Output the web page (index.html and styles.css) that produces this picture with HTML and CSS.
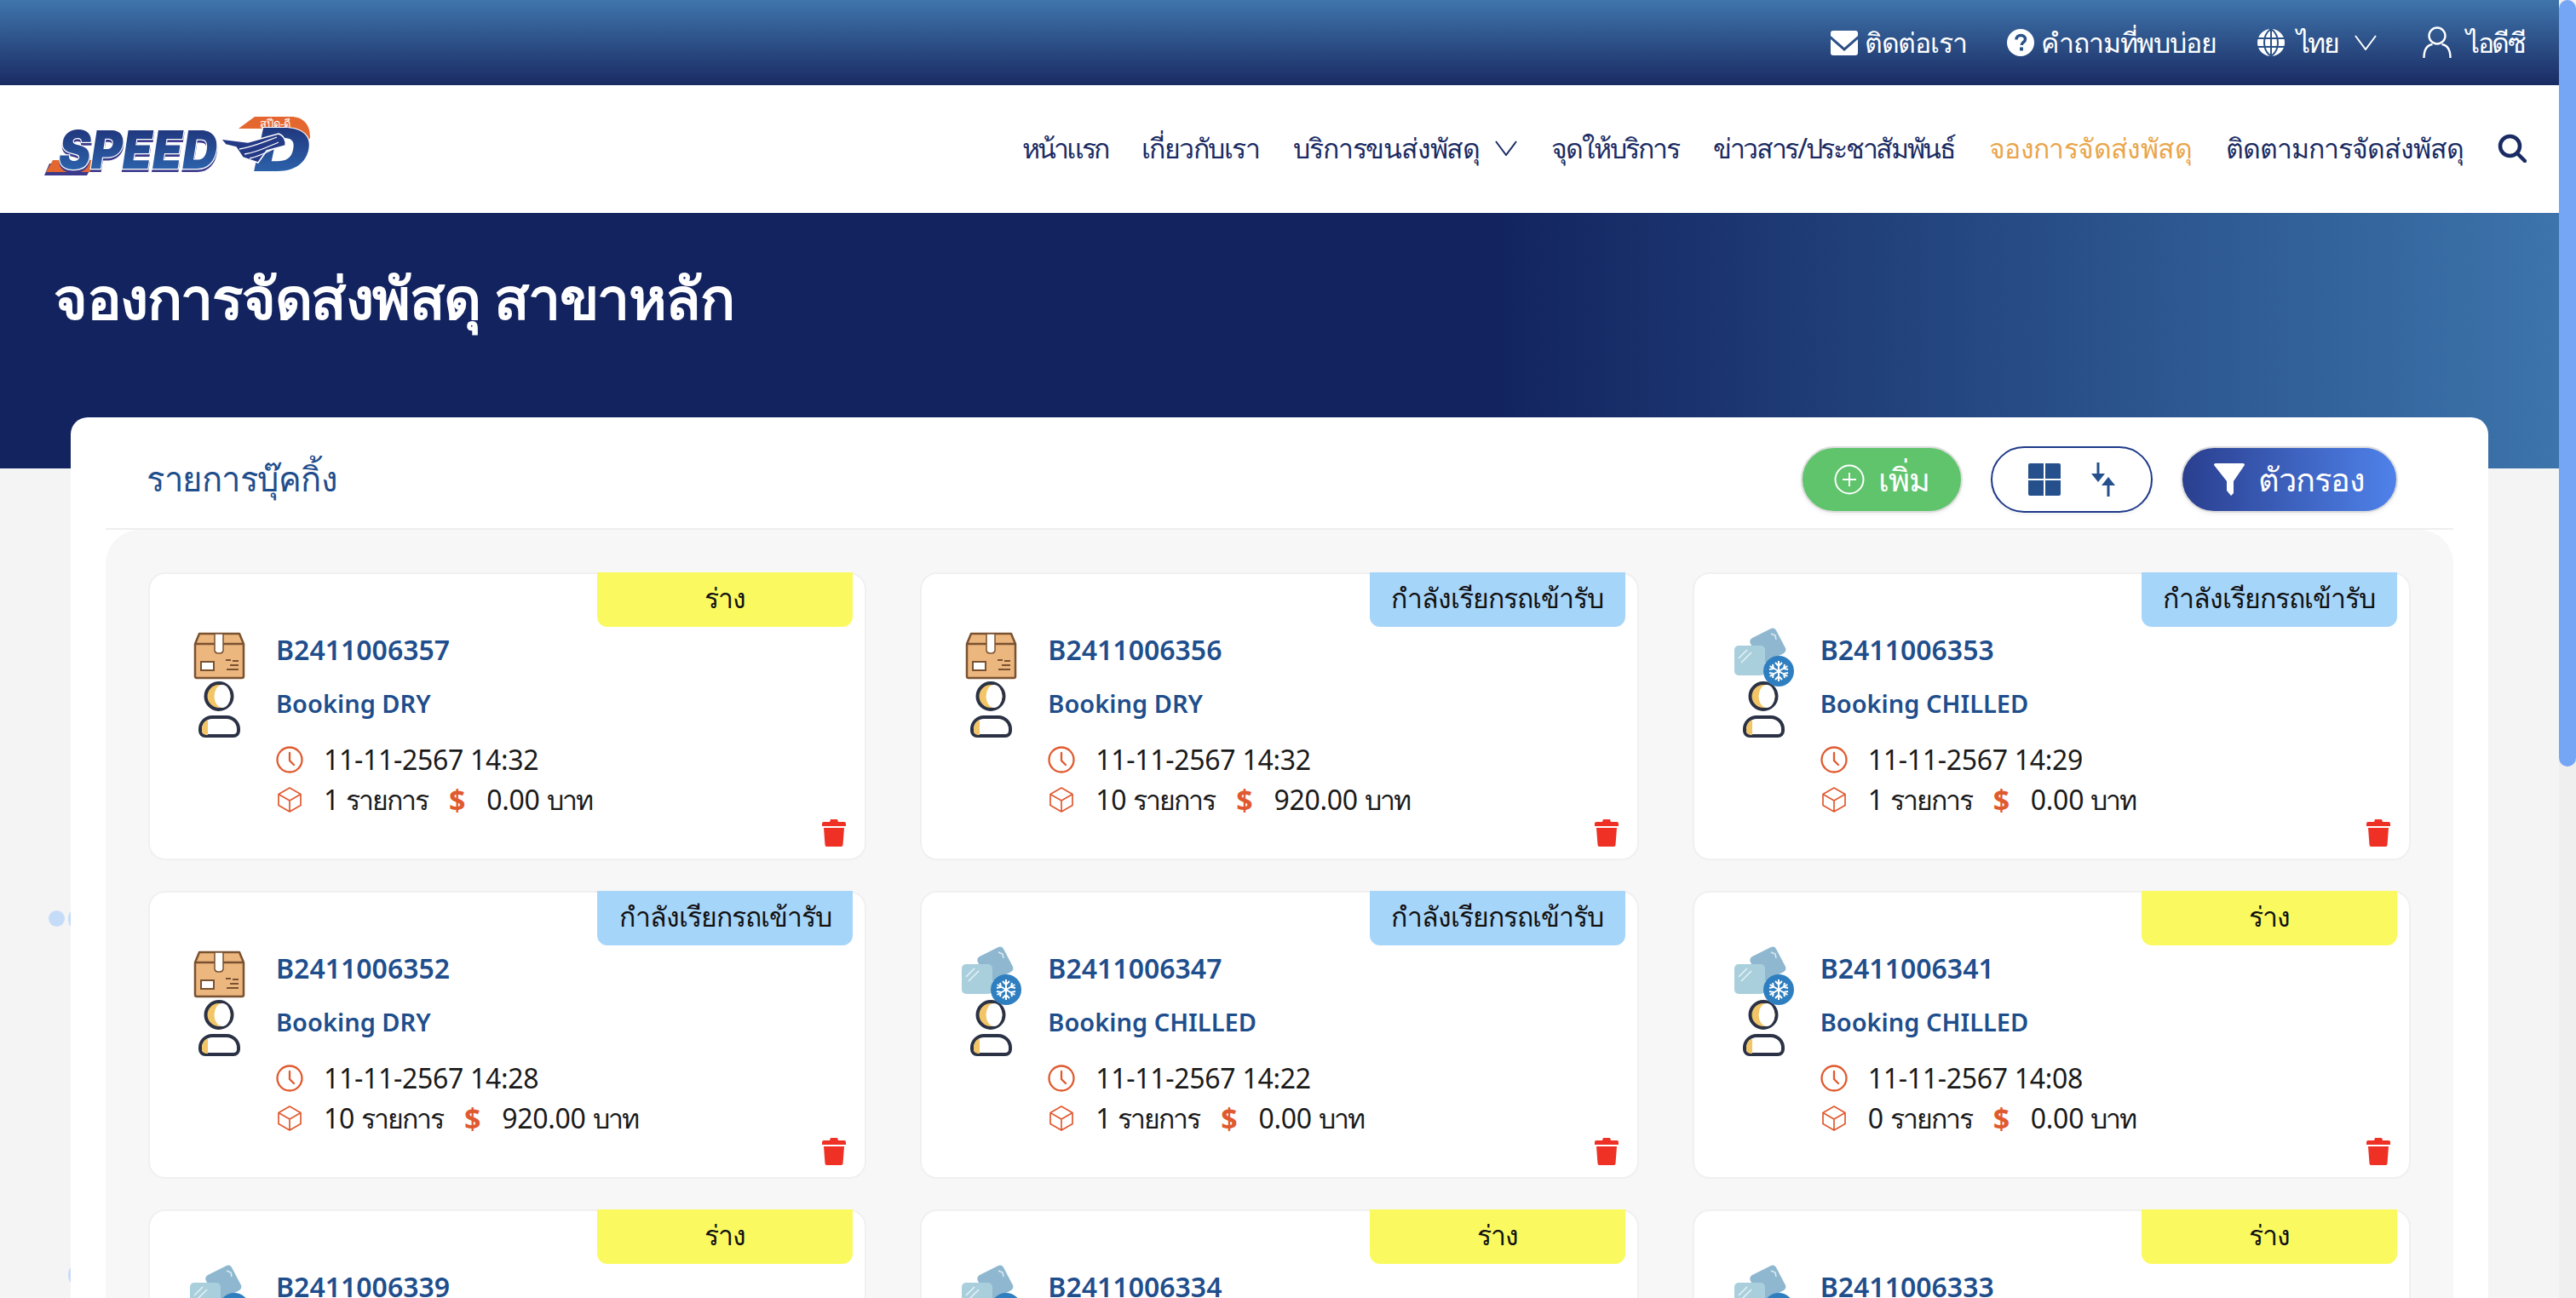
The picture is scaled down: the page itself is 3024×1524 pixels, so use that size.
FILE: index.html
```html
<!DOCTYPE html>
<html lang="th">

<head>
    <meta charset="UTF-8">
    <title>จองการจัดส่งพัสดุ สาขาหลัก</title>
    <link rel="stylesheet" href="styles.css">
</head>

<body>
    <svg class="defs" width="0" height="0">
        <defs>
            <symbol id="person" viewBox="0 0 70 130">
                <circle cx="34" cy="81.5" r="15.5" fill="#f2c566" stroke="#2b3245" stroke-width="4"/>
                <ellipse cx="38" cy="81.5" rx="9.5" ry="13.5" fill="#fff"/>
                <path d="M12 122v-2a14 14 0 0 1 14-14h17a14 14 0 0 1 14 14v2a6 6 0 0 1-6 6H18a6 6 0 0 1-6-6z" fill="#fff" stroke="#2b3245" stroke-width="4"/>
                <path d="M14 122v-2a12 12 0 0 1 7-11v18h-2a5 5 0 0 1-5-5z" fill="#f2c566"/>
            </symbol>
            <symbol id="dry" viewBox="0 0 70 130">
                <use href="#person" width="70" height="130"/>
                <path d="M6 20l5-12h47l5 12v38a2 2 0 0 1-2 2H8a2 2 0 0 1-2-2z" fill="#ecb67f" stroke="#7a5230" stroke-width="2.500" stroke-linejoin="round"/>
                <path d="M6 20h57" stroke="#7a5230" stroke-width="2.500"/>
                <path d="M29 8h10v20a4 4 0 0 1-4 3h-2a4 4 0 0 1-4-3z" fill="#fff" stroke="#7a5230" stroke-width="1.500"/>
                <rect x="13" y="41" width="15" height="10" fill="#fff" stroke="#7a5230" stroke-width="2"/>
                <path d="M42 39h6M50 40h7M47 45h10M43 50h14" stroke="#7a5230" stroke-width="2"/>
            </symbol>
            <symbol id="chilled" viewBox="0 0 70 130">
                <use href="#person" width="70" height="130"/>
                <path d="M21 13L43 2a5 5 0 0 1 6 2l11 21a5 5 0 0 1-2 6L37 42a5 5 0 0 1-6-2L19 20a5 5 0 0 1 2-7z" fill="#8fb8d0"/>
                <path d="M43 8l5 2 1 5" fill="none" stroke="#dcebf2" stroke-width="1.500"/>
                <rect x="0" y="22" width="36" height="35" rx="5" fill="#a9cfdd"/>
                <path d="M5 37L15 27M8 42L20 30" stroke="#e6f2f6" stroke-width="1.500"/>
                <circle cx="52" cy="52" r="18" fill="#2f7fc0"/>
                <path d="M52 40v24M41.600 46l20.800 12M41.600 58l20.800-12M48 42l4 4 4-4M48 62l4-4 4 4M41 50l5-1-1-5M63 54l-5 1 1 5M41 54l5 1-1 5M63 50l-5-1 1-5" fill="none" stroke="#fff" stroke-width="2"/>
            </symbol>
            <symbol id="clock" viewBox="0 0 32 32">
                <circle cx="16" cy="16" r="14.500" fill="none" stroke="#e05a2f" stroke-width="2.300"/>
                <path d="M16 8v9l5 5" fill="none" stroke="#e05a2f" stroke-width="2.300" stroke-linecap="round"/>
            </symbol>
            <symbol id="cube" viewBox="0 0 32 32">
                <path d="M16 2l13 7.500v13L16 30 3 22.500v-13zM3 9.500L16 17l13-7.500M16 17v13" fill="none" stroke="#e05a2f" stroke-width="1.700" stroke-linejoin="round"/>
            </symbol>
            <symbol id="trash" viewBox="0 0 28 32">
                <path d="M0 5a2 2 0 0 1 2-2h7l1-3h8l1 3h7a2 2 0 0 1 2 2v3H0z" fill="#ee3124"/>
                <path d="M2 10h24l-1.500 20a2 2 0 0 1-2 2h-17a2 2 0 0 1-2-2z" fill="#ee3124"/>
            </symbol>
            <symbol id="chevron" viewBox="0 0 26 18">
                <path d="M1 1l12 16L25 1" fill="none" stroke="currentColor" stroke-width="2"/>
            </symbol>
        </defs>
    </svg>

    <div class="page">
        <!-- แถบบน -->
        <div class="topbar">
            <a class="top-link">
                <svg class="top-icon" viewBox="0 0 32 32"><path d="M3 2h26a3 3 0 0 1 3 3v3L16 22 0 8V5a3 3 0 0 1 3-3zM0 12l16 14 16-14v16a3 3 0 0 1-3 3H3a3 3 0 0 1-3-3z" fill="#fff"/></svg>
                ติดต่อเรา
            </a>
            <a class="top-link">
                <svg class="top-icon" viewBox="0 0 32 32"><circle cx="16" cy="16" r="16" fill="#fff"/><path d="M11 12.500c0-3 2.300-5 5.300-5s5.200 1.800 5.200 4.400c0 3.800-4.300 3.700-4.300 7" fill="none" stroke="#2a5288" stroke-width="3.500"/><rect x="15" y="21.500" width="4" height="4" fill="#2a5288"/></svg>
                คำถามที่พบบ่อย
            </a>
            <a class="top-link lang">
                <svg class="top-icon" viewBox="0 0 32 32"><circle cx="16" cy="16" r="16" fill="#fff"/><path d="M16 0c-6 4-8 10-8 16s2 12 8 16c6-4 8-10 8-16s-2-12-8-16zM16 0v32M0 11h32M0 21h32" fill="none" stroke="#2a5288" stroke-width="2"/></svg>
                ไทย
                <svg class="chevron top-chevron"><use href="#chevron"/></svg>
            </a>
            <a class="top-link account">
                <svg class="user-icon" viewBox="0 0 34 38"><circle cx="17" cy="11" r="9.500" fill="none" stroke="#fff" stroke-width="2.400"/><path d="M1.500 37c0-10 4-15 10-16M32.500 37c0-10-4-15-10-16" fill="none" stroke="#fff" stroke-width="2.400"/></svg>
                ไอดีซี
            </a>
        </div>

        <!-- เมนูหลัก -->
        <div class="navbar">
            <svg class="logo" viewBox="0 0 315 72">
                <defs>
                    <linearGradient id="logoBlue" x1="0" y1="0" x2="0" y2="1">
                        <stop offset="0" stop-color="#1d2a70"/>
                        <stop offset="1" stop-color="#2f6fb8"/>
                    </linearGradient>
                </defs>
                <path d="M3 71l6-14h52l-8 14z" fill="#3b3a8c"/>
                <path d="M5 67l8-14h52l-8 14z" fill="#e4672f"/>
                <text class="logo-speed" x="20" y="66" textLength="186" lengthAdjust="spacingAndGlyphs" fill="#3b3a8c" stroke="#3b3a8c" stroke-width="2">SPEED</text>
                <text class="logo-speed" x="20" y="63" textLength="186" lengthAdjust="spacingAndGlyphs" fill="url(#logoBlue)" stroke="#fff" stroke-width="2.500" paint-order="stroke">SPEED</text>
                <path d="M231 16l19-14h42c16 0 23 10 23 24l-2 6-14-16z" fill="#e4672f"/>
                <text class="logo-d" x="249" y="66" textLength="66" lengthAdjust="spacingAndGlyphs" fill="url(#logoBlue)" stroke="#fff" stroke-width="2" paint-order="stroke">D</text>
                <text class="logo-thai" x="256" y="15" textLength="36" lengthAdjust="spacingAndGlyphs" fill="#fff">สปีด-ดี</text>
                <path d="M210 28l32 4 36-10c6 2 9 8 8 14l-22 6-10 14-18-6-8-12-12-3z" fill="#243a86" stroke="#fff" stroke-width="1.500"/>
                <path d="M232 40c14-2 28-8 44-14M238 46c14-2 26-8 40-14M244 51c10-2 22-8 30-12" fill="none" stroke="#fff" stroke-width="1.300"/>
            </svg>
            <nav class="menu">
                <a>หน้าแรก</a>
                <a>เกี่ยวกับเรา</a>
                <a class="has-sub">บริการขนส่งพัสดุ <svg class="chevron"><use href="#chevron"/></svg></a>
                <a>จุดให้บริการ</a>
                <a>ข่าวสาร/ประชาสัมพันธ์</a>
                <a class="active">จองการจัดส่งพัสดุ</a>
                <a>ติดตามการจัดส่งพัสดุ</a>
                <svg class="search" viewBox="0 0 34 34"><circle cx="14.500" cy="14.500" r="11.500" fill="none" stroke="#1a2b63" stroke-width="4.500"/><path d="M23 23l9 9" stroke="#1a2b63" stroke-width="4.500" stroke-linecap="round"/></svg>
            </nav>
        </div>

        <div class="hero">
            <h1>จองการจัดส่งพัสดุ สาขาหลัก</h1>
        </div>

        <span class="dot dot-a"></span>
        <span class="dot dot-b"></span>
        <span class="dot dot-c"></span>

        <div class="panel">
            <div class="panel-head">
                <h2>รายการบุ๊คกิ้ง</h2>
                <div class="actions">
                    <button class="btn btn-add">
                        <svg class="btn-icon" viewBox="0 0 36 36"><circle cx="18" cy="18" r="16.500" fill="none" stroke="#fff" stroke-width="2"/><path d="M18 10v16M10 18h16" stroke="#fff" stroke-width="2"/></svg>
                        เพิ่ม
                    </button>
                    <button class="btn btn-view">
                        <svg class="grid-icon" viewBox="0 0 38 38"><path d="M0 2a2 2 0 0 1 2-2h16v18H0zM20 0h16a2 2 0 0 1 2 2v16H20zM0 20h18v18H2a2 2 0 0 1-2-2zM20 20h18v16a2 2 0 0 1-2 2H20z" fill="#25508c"/></svg>
                        <svg class="sort-icon" viewBox="0 0 28 40"><path d="M8 0v14M20 40V26" stroke="#25508c" stroke-width="3"/><path d="M0 13h16l-8 10zM12 27h16l-8-10z" fill="#25508c"/></svg>
                    </button>
                    <button class="btn btn-filter">
                        <svg class="btn-icon" viewBox="0 0 36 38"><path d="M0 2a2 2 0 0 1 2-2h32a2 2 0 0 1 2 2L23 21v14l-3 3-5-6V21z" fill="#fff"/></svg>
                        ตัวกรอง
                    </button>
                </div>
            </div>

            <div class="list">
                <div class="card">
                    <span class="badge draft">ร่าง</span>
                    <svg class="type-icon"><use href="#dry"/></svg>
                    <div class="info">
                        <div class="code">B2411006357</div>
                        <div class="type">Booking DRY</div>
                        <div class="line first"><svg class="ico"><use href="#clock"/></svg>11-11-2567 14:32</div>
                        <div class="line"><svg class="ico"><use href="#cube"/></svg>1&nbsp;<span class="th">รายการ</span><span class="baht">$</span>0.00&nbsp;<span class="th">บาท</span></div>
                    </div>
                    <svg class="trash"><use href="#trash"/></svg>
                </div>
                <div class="card">
                    <span class="badge calling">กำลังเรียกรถเข้ารับ</span>
                    <svg class="type-icon"><use href="#dry"/></svg>
                    <div class="info">
                        <div class="code">B2411006356</div>
                        <div class="type">Booking DRY</div>
                        <div class="line first"><svg class="ico"><use href="#clock"/></svg>11-11-2567 14:32</div>
                        <div class="line"><svg class="ico"><use href="#cube"/></svg>10&nbsp;<span class="th">รายการ</span><span class="baht">$</span>920.00&nbsp;<span class="th">บาท</span></div>
                    </div>
                    <svg class="trash"><use href="#trash"/></svg>
                </div>
                <div class="card">
                    <span class="badge calling">กำลังเรียกรถเข้ารับ</span>
                    <svg class="type-icon"><use href="#chilled"/></svg>
                    <div class="info">
                        <div class="code">B2411006353</div>
                        <div class="type">Booking CHILLED</div>
                        <div class="line first"><svg class="ico"><use href="#clock"/></svg>11-11-2567 14:29</div>
                        <div class="line"><svg class="ico"><use href="#cube"/></svg>1&nbsp;<span class="th">รายการ</span><span class="baht">$</span>0.00&nbsp;<span class="th">บาท</span></div>
                    </div>
                    <svg class="trash"><use href="#trash"/></svg>
                </div>
                <div class="card">
                    <span class="badge calling">กำลังเรียกรถเข้ารับ</span>
                    <svg class="type-icon"><use href="#dry"/></svg>
                    <div class="info">
                        <div class="code">B2411006352</div>
                        <div class="type">Booking DRY</div>
                        <div class="line first"><svg class="ico"><use href="#clock"/></svg>11-11-2567 14:28</div>
                        <div class="line"><svg class="ico"><use href="#cube"/></svg>10&nbsp;<span class="th">รายการ</span><span class="baht">$</span>920.00&nbsp;<span class="th">บาท</span></div>
                    </div>
                    <svg class="trash"><use href="#trash"/></svg>
                </div>
                <div class="card">
                    <span class="badge calling">กำลังเรียกรถเข้ารับ</span>
                    <svg class="type-icon"><use href="#chilled"/></svg>
                    <div class="info">
                        <div class="code">B2411006347</div>
                        <div class="type">Booking CHILLED</div>
                        <div class="line first"><svg class="ico"><use href="#clock"/></svg>11-11-2567 14:22</div>
                        <div class="line"><svg class="ico"><use href="#cube"/></svg>1&nbsp;<span class="th">รายการ</span><span class="baht">$</span>0.00&nbsp;<span class="th">บาท</span></div>
                    </div>
                    <svg class="trash"><use href="#trash"/></svg>
                </div>
                <div class="card">
                    <span class="badge draft">ร่าง</span>
                    <svg class="type-icon"><use href="#chilled"/></svg>
                    <div class="info">
                        <div class="code">B2411006341</div>
                        <div class="type">Booking CHILLED</div>
                        <div class="line first"><svg class="ico"><use href="#clock"/></svg>11-11-2567 14:08</div>
                        <div class="line"><svg class="ico"><use href="#cube"/></svg>0&nbsp;<span class="th">รายการ</span><span class="baht">$</span>0.00&nbsp;<span class="th">บาท</span></div>
                    </div>
                    <svg class="trash"><use href="#trash"/></svg>
                </div>
                <div class="card">
                    <span class="badge draft">ร่าง</span>
                    <svg class="type-icon"><use href="#chilled"/></svg>
                    <div class="info">
                        <div class="code">B2411006339</div>
                    </div>
                </div>
                <div class="card">
                    <span class="badge draft">ร่าง</span>
                    <svg class="type-icon"><use href="#chilled"/></svg>
                    <div class="info">
                        <div class="code">B2411006334</div>
                    </div>
                </div>
                <div class="card">
                    <span class="badge draft">ร่าง</span>
                    <svg class="type-icon"><use href="#chilled"/></svg>
                    <div class="info">
                        <div class="code">B2411006333</div>
                    </div>
                </div>
            </div>
        </div>
    </div>

    <div class="scrollbar"><div class="thumb"></div></div>
</body>

</html>
```

FILE: styles.css
```css
body {
    font-family: "Noto Sans", "DejaVu Sans", sans-serif;
    background-color: #f4f4f4;
    margin: 0;
    padding: 0;
    height: 1524px;
    overflow: hidden;
    display: flex;
}

.defs {
    position: absolute;
}

.page {
    flex: 1;
    min-width: 0;
    position: relative;
}

/* แถบบน */
.topbar {
    height: 100px;
    background: linear-gradient(180deg, #3f75ac 0%, #1a2b63 100%);
    display: flex;
    justify-content: flex-end;
    align-items: center;
    gap: 48px;
    padding-right: 41px;
    color: #fff;
    font-size: 32px;
}

.top-link {
    display: flex;
    align-items: center;
    gap: 8px;
    letter-spacing: -1.2px;
}

.lang {
    gap: 14px;
    letter-spacing: -2.5px;
}

.account {
    letter-spacing: -2.5px;
    margin-left: 6px;
}

.top-icon {
    width: 32px;
    height: 32px;
}

.user-icon {
    width: 34px;
    height: 38px;
    margin-right: 9px;
}

.chevron {
    width: 26px;
    height: 18px;
    color: #1a2b63;
}

.top-chevron {
    color: #fff;
    margin-left: 6px;
}

/* เมนูหลัก */
.navbar {
    height: 150px;
    background-color: #fff;
    display: flex;
    justify-content: space-between;
    align-items: center;
    padding: 0 38px 0 49px;
}

.logo {
    width: 315px;
    height: 72px;
    margin-top: -8px;
}

.logo-speed {
    font-family: "Inter", sans-serif;
    font-weight: 900;
    font-style: italic;
    font-size: 62px;
}

.logo-d {
    font-family: "Inter", sans-serif;
    font-weight: 900;
    font-style: italic;
    font-size: 70px;
}

.logo-thai {
    font-size: 13px;
}

.menu {
    display: flex;
    align-items: center;
    gap: 40px;
    font-size: 32px;
    color: #1a2b63;
    margin-top: -2px;
}

.menu a:nth-child(1) {
    letter-spacing: -3px;
}

.menu a:nth-child(2) {
    letter-spacing: -1.500px;
}

.menu a:nth-child(3) {
    letter-spacing: -1.200px;
}

.menu a:nth-child(4) {
    letter-spacing: -2px;
}

.menu a:nth-child(5) {
    letter-spacing: -2.300px;
}

.menu a:nth-child(6) {
    letter-spacing: -0.600px;
}

.menu a:nth-child(7) {
    letter-spacing: -1px;
}

.menu .active {
    color: #e9a64b;
}

.has-sub {
    display: flex;
    align-items: center;
    gap: 18px;
}

.search {
    width: 34px;
    height: 34px;
}

/* ส่วนหัว */
.hero {
    height: 300px;
    background: linear-gradient(90deg, #12235f 58%, #3c74ab 100%);
    padding: 0 0 0 63px;
}

.hero h1 {
    margin: 0;
    padding-top: 54px;
    font-size: 68px;
    font-weight: 600;
    line-height: 90px;
    letter-spacing: -1.500px;
    color: #fff;
}

.dot {
    position: absolute;
    background-color: #c5dcf8;
    border-radius: 50%;
}

.dot-a {
    left: 57px;
    top: 1069px;
    width: 19px;
    height: 19px;
}

.dot-b {
    left: 80px;
    top: 1070px;
    width: 8px;
    height: 18px;
}

.dot-c {
    left: 80px;
    top: 1488px;
    width: 8px;
    height: 18px;
}

/* รายการ */
.panel {
    position: relative;
    margin: -60px 83px 0 83px;
    background-color: #fff;
    border-radius: 20px 20px 0 0;
}

.panel-head {
    height: 132px;
    display: flex;
    justify-content: space-between;
    align-items: center;
    margin: 0 41px;
    padding: 16px 65px 0 48px;
    border-bottom: 2px solid #eee;
    box-sizing: border-box;
}

.panel-head h2 {
    margin: 0;
    font-size: 40px;
    font-weight: 500;
    letter-spacing: -0.500px;
    color: #1f4e8c;
}

.actions {
    display: flex;
    gap: 33px;
}

.btn {
    height: 78px;
    border-radius: 39px;
    border: 2px solid #ddd;
    box-shadow: 0 2px 4px rgba(0, 0, 0, 0.06);
    font-family: inherit;
    font-size: 38px;
    letter-spacing: -1px;
    color: #fff;
    display: flex;
    align-items: center;
    justify-content: center;
    gap: 16px;
    padding: 0;
}

.btn-add {
    width: 190px;
    background-color: #5fc46c;
}

.btn-view {
    width: 190px;
    background-color: #fff;
    border-color: #1f3a8a;
    gap: 36px;
}

.btn-filter {
    width: 255px;
    background: linear-gradient(90deg, #2a3f8f 0%, #4f82ea 100%);
}

.btn-icon {
    width: 36px;
    height: 38px;
}

.grid-icon {
    width: 38px;
    height: 38px;
}

.sort-icon {
    width: 28px;
    height: 40px;
}

.list {
    background-color: #f7f7f7;
    border-radius: 40px 40px 0 0;
    margin: 0 41px;
    padding: 50px 50px;
    display: grid;
    grid-template-columns: repeat(3, 1fr);
    gap: 36px 63px;
}

.card {
    position: relative;
    height: 338px;
    box-sizing: border-box;
    background-color: #fff;
    border: 2px solid #f0f0f0;
    border-radius: 20px;
    padding: 62px 0 0 47px;
    display: flex;
    gap: 31px;
}

.badge {
    position: absolute;
    top: -2px;
    right: 14px;
    width: 300px;
    height: 64px;
    border-radius: 0 0 12px 12px;
    font-size: 32px;
    font-weight: 500;
    line-height: 60px;
    letter-spacing: -1px;
    text-align: center;
    color: #111;
}

.draft {
    background-color: #fafa60;
}

.calling {
    background-color: #a6d5fa;
}

.type-icon {
    width: 70px;
    height: 130px;
    flex-shrink: 0;
}

.code,
.type {
    font-size: 32px;
    font-weight: 600;
    line-height: 54px;
    color: #1f4e8c;
}

.type {
    margin-top: 9px;
    font-size: 29px;
}

.line {
    display: flex;
    align-items: center;
    font-size: 32px;
    line-height: 46px;
    letter-spacing: -0.300px;
    color: #1a1a1a;
    margin-top: 1px;
}

.line.first {
    margin-top: 16px;
}

.th {
    letter-spacing: -2px;
}

.ico {
    width: 32px;
    height: 32px;
    margin-right: 24px;
}

.baht {
    font-weight: bold;
    font-size: 34px;
    color: #e05a2f;
    margin: 0 25px;
}

.trash {
    position: absolute;
    right: 22px;
    bottom: 14px;
    width: 28px;
    height: 32px;
}

.scrollbar {
    width: 20px;
    background-color: #efefef;
}

.thumb {
    height: 900px;
    background-color: #75a5f5;
    border-radius: 10px;
}
```
